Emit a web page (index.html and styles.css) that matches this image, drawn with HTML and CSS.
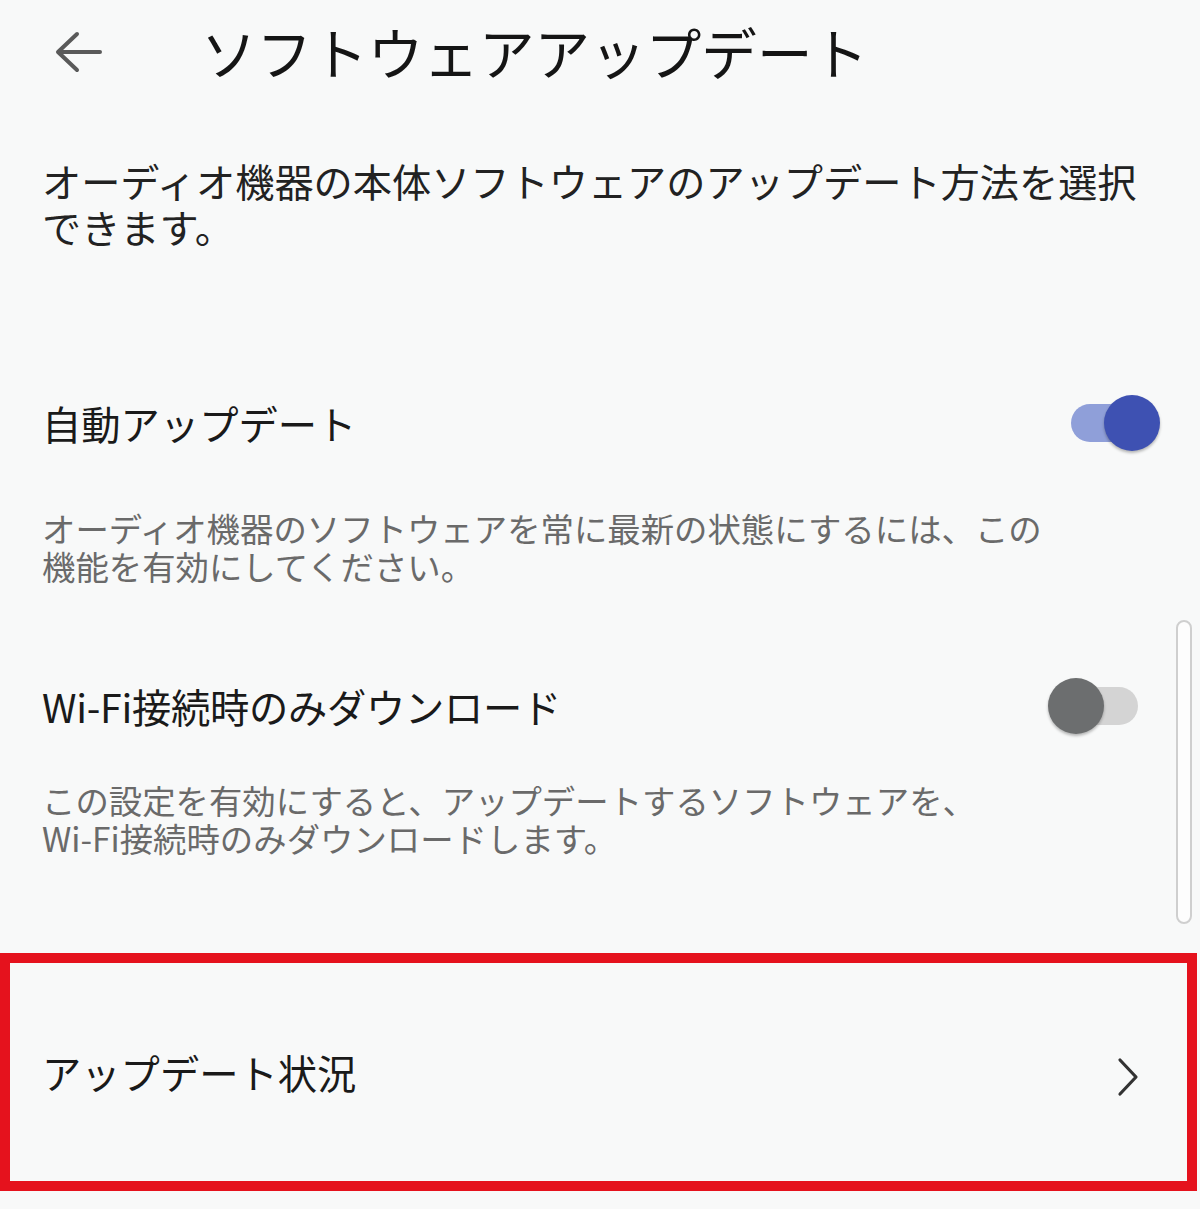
FILE: index.html
```html
<!DOCTYPE html>
<html lang="ja">
<head>
<meta charset="utf-8">
<title>ソフトウェアアップデート</title>
<link rel="stylesheet" href="styles.css">
</head>
<body>
<div class="page">
  <header class="header">
    <span class="back" aria-label="戻る">
      <svg width="52" height="52" viewBox="0 0 52 52"><path d="M48 23 H8 M25 5 L6 23 L25 41" fill="none" stroke="#5a5a5a" stroke-width="4" stroke-linecap="round" stroke-linejoin="round"/></svg>
    </span>
    <h1 class="title">ソフトウェアアップデート</h1>
  </header>

  <div class="intro"><span class="line">オーディオ機器の本体ソフトウェアのアップデート方法を選択</span><span class="line">できます。</span></div>

  <div class="row row-auto">
    <span class="row-label">自動アップデート</span>
    <span class="switch switch-on"><span class="track"></span><span class="thumb"></span></span>
  </div>
  <div class="summary summary-auto"><span class="line">オーディオ機器のソフトウェアを常に最新の状態にするには、この</span><span class="line">機能を有効にしてください。</span></div>

  <div class="row row-wifi">
    <span class="row-label">Wi-Fi接続時のみダウンロード</span>
    <span class="switch switch-off"><span class="track"></span><span class="thumb"></span></span>
  </div>
  <div class="summary summary-wifi"><span class="line">この設定を有効にすると、アップデートするソフトウェアを、</span><span class="line">Wi-Fi接続時のみダウンロードします。</span></div>

  <div class="status">
    <span class="row-label">アップデート状況</span>
    <svg class="chev" width="24" height="40" viewBox="0 0 24 40"><path d="M4 3 L20 20 L4 37" fill="none" stroke="#333" stroke-width="3.2" stroke-linecap="round" stroke-linejoin="round"/></svg>
  </div>

  <div class="scrollbar"></div>
</div>
</body>
</html>
```

FILE: styles.css
```css
html, body {
  margin: 0;
  padding: 0;
  background: #f8f9f9;
}
body {
  font-family: "Noto Sans CJK JP", "Noto Sans", sans-serif;
  color: #1b1b1b;
}
.page {
  position: relative;
  width: 1200px;
  height: 1209px;
  overflow: hidden;
}
.header {
  height: 104px;
  display: flex;
  align-items: center;
}
.back {
  display: flex;
  margin-left: 52px;
  width: 52px;
  height: 52px;
  margin-top: 6px;
}
.title {
  margin: 0 0 0 97px;
  font-size: 55.6px;
  font-weight: 400;
  line-height: 1;
  color: #151515;
}
.line {
  display: block;
  white-space: nowrap;
}
.intro {
  margin: 53px 0 0 0;
  padding-left: 42px;
  font-size: 39.2px;
  color: #222;
}
.intro .line {
  height: 46px;
  line-height: 46px;
}
.row {
  height: 100px;
  display: flex;
  align-items: center;
  justify-content: space-between;
  padding-left: 42px;
  padding-right: 40px;
}
.row-auto { margin-top: 124px; }
.row-wifi { margin-top: 71px; }
.row-label {
  font-size: 39.3px;
  line-height: 1;
  color: #1a1a1a;
}
.row-wifi .row-label { letter-spacing: -0.3px; }
.summary {
  margin: 0;
  padding-left: 42px;
  font-size: 33.4px;
  color: #6a6a6a;
}
.summary .line {
  height: 38px;
  line-height: 38px;
}
.summary-auto { margin-top: 36px; }
.summary-wifi { margin-top: 25px; }

.switch {
  position: relative;
  width: 112px;
  height: 56px;
}
.track {
  position: absolute;
  top: 9px;
  height: 38px;
  border-radius: 19px;
}
.thumb {
  position: absolute;
  top: 0;
  width: 56px;
  height: 56px;
  border-radius: 50%;
  box-shadow: 0 2px 3px rgba(0,0,0,0.28);
}
.switch-on .track { left: 23px; width: 79px; background: #8f9fd9; }
.switch-on .thumb { right: 0; background: #3e51b2; }
.switch-off .track { left: 12px; width: 78px; background: #d4d4d4; }
.switch-off .thumb { left: 0; background: #6c6e6f; }

.status {
  box-sizing: border-box;
  margin-top: 96px;
  width: 1197px;
  height: 238px;
  border: 10px solid #e5121d;
  display: flex;
  align-items: center;
  justify-content: space-between;
  padding-left: 32px;
  padding-right: 47px;
}
.chev { display: block; margin-top: 10px; }

.scrollbar {
  position: absolute;
  left: 1176px;
  top: 620px;
  width: 12px;
  height: 300px;
  border: 2px solid #cfcfcf;
  border-radius: 8px;
  background: #fdfdfd;
}
```
